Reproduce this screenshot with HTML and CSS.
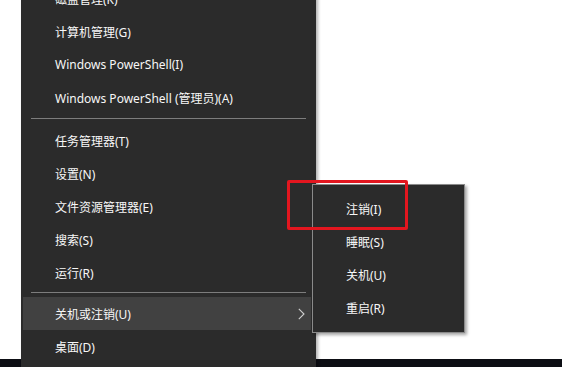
FILE: index.html
```html
<!DOCTYPE html>
<html lang="zh-CN">
<head>
<meta charset="utf-8">
<link rel="stylesheet" href="styles.css">
</head>
<body>
<div class="screen">
  <div class="desktop"></div>
  <div class="taskbar"></div>

  <div class="menu">
    <div class="item">磁盘管理(K)</div>
    <div class="item">计算机管理(G)</div>
    <div class="item">Windows PowerShell(I)</div>
    <div class="item">Windows PowerShell (管理员)(A)</div>
    <div class="sep sep-a"></div>
    <div class="item">任务管理器(T)</div>
    <div class="item">设置(N)</div>
    <div class="item">文件资源管理器(E)</div>
    <div class="item">搜索(S)</div>
    <div class="item">运行(R)</div>
    <div class="sep sep-b"></div>
    <div class="item active"><span>关机或注销(U)</span>
      <svg class="chev" width="7" height="12" viewBox="0 0 7 12"><path d="M0.8 0.8 L6 6 L0.8 11.2" fill="none" stroke="#cfcfcf" stroke-width="1.1"/></svg>
    </div>
    <div class="item">桌面(D)</div>
  </div>

  <div class="submenu">
    <div class="item">注销(I)</div>
    <div class="item">睡眠(S)</div>
    <div class="item">关机(U)</div>
    <div class="item">重启(R)</div>
  </div>

  <div class="mark"></div>
</div>
</body>
</html>
```

FILE: styles.css
```css
* { box-sizing: border-box; }
html, body { margin: 0; padding: 0; }
body {
  font-family: "Noto Sans", "Noto Sans CJK SC", sans-serif;
  font-size: 12px;
  color: #f7f7f7;
  background: #ffffff;
}
.screen {
  position: relative;
  width: 562px;
  height: 367px;
  overflow: hidden;
  display: flex;
  flex-direction: column;
}
.desktop { flex: 1; background: #ffffff; }
.taskbar { height: 8px; background: #0d0e14; }

.menu {
  position: absolute;
  left: 21px;
  top: -18px;
  width: 295px;
  padding: 0 5px 10px 2px;
  background: #2b2b2b;
  box-shadow: 2px 0 3px rgba(0,0,0,0.3);
}
.item {
  height: 33px;
  display: flex;
  align-items: center;
  justify-content: space-between;
  padding: 0 6px 0 32px;
  white-space: nowrap;
}
.item.active { background: #414141; }
.sep {
  height: 1px;
  background: #7d7d7d;
}
.sep-a { margin: 4px 5px 5px 8px; }
.sep-b { margin: 3px 5px 4px 8px; }
.chev { display: block; }

.submenu {
  position: absolute;
  left: 312px;
  top: 184px;
  width: 153px;
  height: 149px;
  padding: 7px 0 8px;
  background: #2b2b2b;
  border: 1px solid #8a8a8a;
  box-shadow: 2px 2px 3px rgba(0,0,0,0.35);
}
.submenu .item { padding-left: 33px; }

.mark {
  position: absolute;
  left: 287px;
  top: 180px;
  width: 121px;
  height: 50px;
  border: 3px solid #e3161f;
  border-radius: 2px;
}
```
